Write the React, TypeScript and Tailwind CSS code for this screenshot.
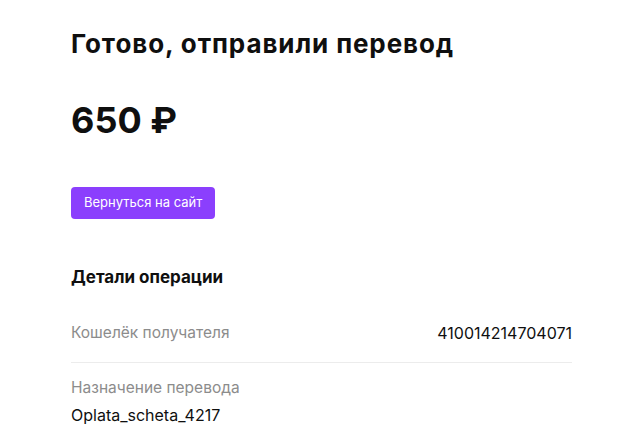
const details = [
  { label: 'Кошелёк получателя', value: '410014214704071', inline: true },
  { label: 'Назначение перевода', value: 'Oplata_scheta_4217', inline: false },
];

export default function App() {
  return (
    <div className="min-h-[441px] bg-white font-['Inter',sans-serif] text-[#0f0f0f]">
      <div className="ml-[71px] w-[501px] pt-[27px]">
        <h1 className="text-[26px] font-bold leading-[34px] tracking-[0.9px]">Готово, отправили перевод</h1>

        <div className="mt-[37px] text-[36px] font-bold leading-[44px]">650 ₽</div>

        <button className="mt-[45px] h-[32px] rounded-[4px] bg-[#8b3ffd] px-[13px] text-[13px] text-white">
          Вернуться на сайт
        </button>

        <h2 className="mt-[46px] text-[17px] font-bold leading-[24px]">Детали операции</h2>

        {/* строки деталей операции */}
        <div className="mt-[33px]">
          {details.map((d) =>
            d.inline ? (
              <div key={d.label} className="flex justify-between border-b border-[#ececec] pb-[18px] text-[16px] leading-[22px]">
                <span className="text-[15.5px] text-[#8c8c8c]">{d.label}</span>
                <span>{d.value}</span>
              </div>
            ) : (
              <div key={d.label} className="pt-[14px] text-[16px] leading-[22px]">
                <div className="text-[15.5px] text-[#8c8c8c]">{d.label}</div>
                <div className="mt-[5px]">{d.value}</div>
              </div>
            )
          )}
        </div>
      </div>
    </div>
  );
}
